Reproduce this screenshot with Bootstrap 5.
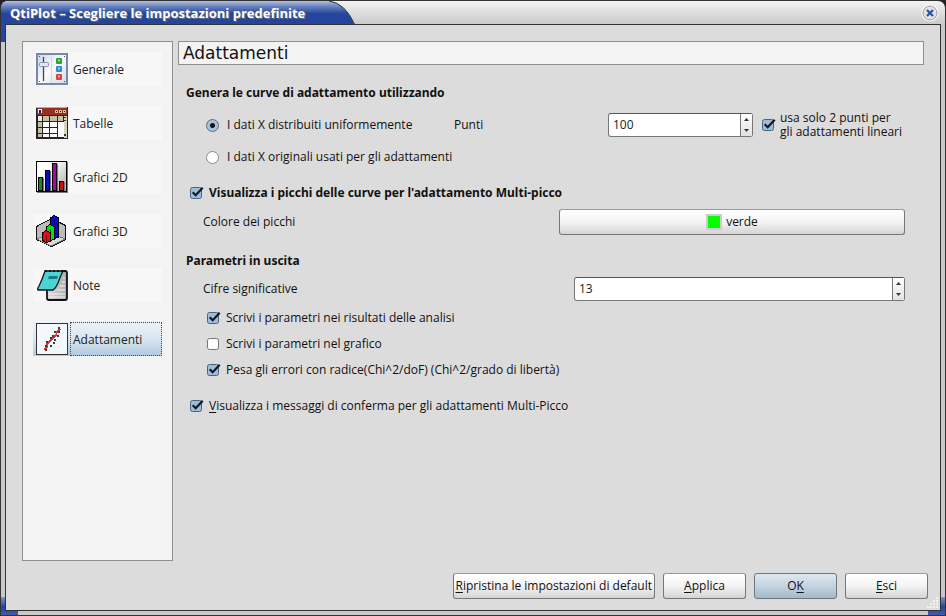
<!DOCTYPE html>
<html lang="it">
<head>
<meta charset="utf-8">
<meta name="viewport" content="width=device-width, initial-scale=1">
<title>QtiPlot - Scegliere le impostazioni predefinite</title>
<link href="https://cdn.jsdelivr.net/npm/bootstrap@5.3.0/dist/css/bootstrap.min.css" rel="stylesheet">
<style>
body { font: 12px/14px "Open Sans", "Noto Sans", sans-serif; color: #111; background: #222; }
.window {
  border: 1px solid #333; border-radius: 8px 8px 0 0; padding: 0 4px 4px;
  background:
    linear-gradient(#b7c2e2, #2b4ca3 8px, #24459c) left 0 top 0 / 4px 41px no-repeat,
    linear-gradient(#7f96cc, #24459c 10px, #3f5cab) left 0 bottom 0 / 17px 18px no-repeat,
    linear-gradient(#7f96cc, #24459c 10px, #3f5cab) right 0 bottom 0 / 17px 18px no-repeat,
    linear-gradient(#f2f2f2, #c9c9c9 24px, #c9c9c9);
}
.titlebar { height: 23px; margin: 0 -4px; }
.caption { width: 355px; height: 23px; }
.caption h1 { z-index: 1; font: bold 13px/16px "Open Sans", sans-serif; color: #fff; padding: 4px 0 0 9px; text-shadow: 1px 1px 0 #67707f; white-space: nowrap; }
.close-button { width: 18px; height: 18px; margin: 3px 6px 0 0; }
.dialog-face { border: 1px solid #333; background: #dcdcdc; padding: 16px 16px 11px; }
.side { width: 151px; background: #f3f3f3; border: 1px solid #8f8f8f; padding: 10px; gap: 20px; }
.side button { height: 34px; padding: 0 0 0 3px; border: 0; background: #f7f7f7; color: #222; text-align: left; }
.side button svg { width: 32px; height: 32px; flex: none; }
.side button span { height: 34px; line-height: 34px; padding-left: 2px; margin-left: 2px; border: 1px solid transparent; }
.side button.chosen { background: linear-gradient(#edf2f8, #d9e5f0 50%, #b0c9e1); }
.side button.chosen span { border: 1px dotted #444; }
.page { margin-left: 5px; }
.page-title { font: 17px/22px "DejaVu Sans", sans-serif; color: #111; background: #f3f3f3; border: 1px solid #8f8f8f; padding: 0 4px; }
.form-area { padding: 18px 19px 0 8px; }
.group-title { font: bold 12px/20px "Noto Sans", sans-serif; }
.sub { padding-left: 17px; }
.sub2 { padding-left: 20px; }
.gap-above { margin-top: 6px; }
.block-above { margin-top: 16px; }
.row-points { display: grid; grid-template-columns: 248fr 154fr 145fr 152fr; height: 32px; }
.row-points label { white-space: nowrap; }
.choice { height: 32px; }
.tick-row { height: 26px; }
.peaks { margin-top: 10px; padding-left: 3px; }
.row-colour { display: grid; grid-template-columns: 356fr 346fr; }
.row-digits { display: grid; grid-template-columns: 371fr 331fr; }
.tick-row, .peaks { gap: 5px; }
.form-check-input.tick { width: 15px; height: 14px; border: 0; border-radius: 0; background: url("data:image/svg+xml,%3Csvg xmlns='http://www.w3.org/2000/svg' viewBox='0 0 15 14'%3E%3Crect x='1.5' y='1.5' width='11' height='11' rx='2' fill='white' stroke='%23777'/%3E%3C/svg%3E") 0 0 / 15px 14px no-repeat; }
.form-check-input.tick:checked { background: url("data:image/svg+xml,%3Csvg xmlns='http://www.w3.org/2000/svg' viewBox='0 0 15 14'%3E%3Crect x='1.5' y='1.5' width='11' height='11' rx='2' fill='%239fbcd9' stroke='%23496480'/%3E%3Cpath d='M3.7 6.2L6.7 9.2L13.7 1.8' fill='none' stroke='%23111922' stroke-width='2.2'/%3E%3C/svg%3E") 0 0 / 15px 14px no-repeat; }
.form-check-input.dot { width: 13px; height: 13px; border: 1px solid #8c8c8c; background: #fff; }
.form-check-input.dot:checked { border-color: #4f6c8a; background: radial-gradient(circle, #111 2px, #a7c1da 3px); }
.spin { height: 24px; border: 1px solid #777; border-top-color: #555; border-radius: 3px; background: #fff; }
.spin input { border: 0; padding: 0 4px; background: none; font: 12px/20px "Open Sans", sans-serif; color: #222; }
.stepper { width: 12px; border-left: 1px solid #777; background: linear-gradient(#fff, #e2e2e2); }
.stepper button { border: 0; padding: 0; background: none; height: 11px; line-height: 0; }
.push { height: 26px; border: 1px solid #777; border-top-color: #999; border-radius: 3px; background: linear-gradient(#fff, #f4f4f4 50%, #d4d4d4); color: #111; padding: 0 2px; }
.push.main { background: linear-gradient(#dee8f0, #c5d4df 50%, #a3b9ca); border-color: #6a7680; }
u { text-underline-offset: 2px; }
.w-std { width: 83px; }
.actions { gap: 8px; margin: 12px -4px 0 0; }
.swatch { width: 16px; height: 16px; background: #0f0; border: 2px solid #ccc; }
.grip { width: 12px; height: 12px; right: 1px; bottom: 1px; }
</style>
<script src="https://cdn.jsdelivr.net/npm/bootstrap@5.3.0/dist/js/bootstrap.bundle.min.js"></script>
</head>
<body>
<div class="window min-vh-100 d-flex flex-column">
  <header class="titlebar d-flex justify-content-between">
    <div class="caption position-relative">
      <svg class="position-absolute top-0 start-0" width="355" height="23" viewBox="0 0 355 23" aria-hidden="true">
        <defs><linearGradient id="cap" x1="0" y1="0" x2="0" y2="1"><stop offset="0" stop-color="#b4c1e2"/><stop offset=".25" stop-color="#6780bd"/><stop offset=".55" stop-color="#24459c"/><stop offset="1" stop-color="#24459c"/></linearGradient></defs>
        <path d="M0 23V6Q1 0 7 0H328Q343 1 353 23Z" fill="url(#cap)"/><path d="M328 0Q344 2 353.500 23" fill="none" stroke="#333"/>
      </svg>
      <h1 class="position-relative m-0">QtiPlot – Scegliere le impostazioni predefinite</h1>
    </div>
    <button class="close-button border-0 bg-transparent p-0 d-flex" aria-label="Chiudi">
      <svg width="18" height="18" viewBox="0 0 18 18"><circle cx="9" cy="9" r="8.500" fill="#fff"/><circle cx="9" cy="9" r="7" fill="#e2e2e2" stroke="#999"/><path d="M6 6L12 12M12 6L6 12" stroke="#2c50a8" stroke-width="2.200"/></svg>
    </button>
  </header>

  <main class="dialog-face flex-grow-1 d-flex flex-column position-relative">
    <div class="d-flex flex-grow-1">
      <nav class="side d-flex flex-column flex-shrink-0" aria-label="Sezioni">
        <button class="d-flex align-items-center">
          <svg viewBox="0 0 32 32"><defs><linearGradient id="pan" x1="0" y1="0" x2="1" y2="1"><stop offset="0" stop-color="#cbd6e6"/><stop offset=".5" stop-color="#f8fafc"/><stop offset="1" stop-color="#cfd9e7"/></linearGradient></defs><rect x="1" y="1" width="30" height="30" fill="url(#pan)" stroke="#7789a5" stroke-width="2"/><path d="M15.500 2V30" stroke="#cfd8e4"/><path d="M7.500 4V28" stroke="#35485f" stroke-width="1.300"/><rect x="3.500" y="9.500" width="9" height="4" rx="1" fill="#dce5f0" stroke="#8496b0"/><rect x="20" y="5" width="6" height="6" rx="1" fill="#2ea62b"/><rect x="20" y="13" width="6" height="6" rx="1" fill="#2d8be0"/><rect x="20" y="21" width="6" height="6" rx="1" fill="#d84343"/><path d="M22 7.500h2M22 15.500h2M22 23.500h2" stroke="#fff" stroke-width="2" opacity=".55"/><path d="M3 3.500h1M3 28.500h1M28 3.500h1M28 28.500h1" stroke="#42536b"/></svg>
          <span class="flex-grow-1">Generale</span></button>
        <button class="d-flex align-items-center">
          <svg viewBox="0 0 32 32" shape-rendering="crispEdges"><path d="M0 0H32V32H0Z" fill="#252525"/><path d="M1 1H31V8H1Z" fill="#963020"/><path d="M0 0H31V1H0Z" fill="#b8ae98"/><path d="M2 2h4v4H2z" fill="#fff"/><path d="M3 3h2v3H3z" fill="#00147c"/><path d="M19 3h3v3h-3zM23 3h3v3h-3zM27 3h3v3h-3z" fill="#c9c4a9"/><path d="M20 4h1v1h-1zM24 4h1v1h-1zM28 4h1v1h-1z" fill="#111"/><path d="M2 9H6V14H2Z" fill="#f0eee0"/><path d="M2 15H6V20H2ZM2 21H6V26H2ZM2 27H6V30H2ZM7 9H13V14H7ZM14 9H21V14H14ZM22 9H27V14H22Z" fill="#c5c0a5"/><path d="M7 15H13V20H7ZM14 15H21V20H14ZM7 21H13V26H7ZM14 21H21V26H14ZM7 27H13V30H7ZM14 27H21V30H14ZM22 15H28V30H22Z" fill="#fff"/><path d="M28 9H31V31H28Z" fill="#d9d5bd"/><path d="M28 10h2v1h-2zM28 13h2v1h-2zM28 27h2v2h-2z" fill="#333"/></svg>
          <span class="flex-grow-1">Tabelle</span></button>
        <button class="d-flex align-items-center">
          <svg viewBox="0 0 32 32" shape-rendering="crispEdges"><defs><linearGradient id="pl" x1="0" y1="0" x2="1" y2="1"><stop offset=".3" stop-color="#fff"/><stop offset="1" stop-color="#aaa"/></linearGradient></defs><path d="M1 1H32V32H1Z" fill="#777"/><rect x=".5" y=".5" width="30" height="30" fill="url(#pl)" stroke="#000"/><path d="M4 17H8V30H4ZM11 10H15V30H11ZM18 3H22V30H18ZM25 21H29V30H25Z" fill="#777"/><g stroke="#000"><path d="M2.500 16.500H6.500V29.500H2.500Z" fill="#10901a"/><path d="M9.500 9.500H13.500V29.500H9.500Z" fill="#0710b2"/><path d="M16.500 2.500H20.500V29.500H16.500Z" fill="#b300a9"/><path d="M23.500 20.500H27.500V29.500H23.500Z" fill="#c51010"/></g></svg>
          <span class="flex-grow-1">Grafici 2D</span></button>
        <button class="d-flex align-items-center">
          <svg viewBox="0 0 32 32" shape-rendering="crispEdges"><path d="M.5 11.500L15.500 3.500L29.500 10.500V24.500L15.500 31.500L.5 24.500Z" fill="#bcbcbc" stroke="#111"/><path d="M1 24L15 18L29 24L15 31Z" fill="#d9d9d9" stroke="#777"/><g stroke="#000"><path d="M14.500 3L18 .5L22.500 3V22L18 24L14.500 21Z" fill="#0808d9"/><path d="M10.500 12L14 9.500L18.500 12V24L14 26L10.500 23Z" fill="#08d821"/><path d="M6.500 18L10 15.500L14.500 18V26L10 28L6.500 25Z" fill="#e01010"/></g><path d="M18 5V22M14 14V24M10 20V27" stroke="#000" opacity=".5"/></svg>
          <span class="flex-grow-1">Grafici 3D</span></button>
        <button class="d-flex align-items-center">
          <svg viewBox="0 0 32 32"><defs><linearGradient id="nt" x1="0" y1="0" x2="1" y2="0"><stop offset="0" stop-color="#ddd"/><stop offset="1" stop-color="#aaa"/></linearGradient></defs><path d="M11 20L26 2H29Q31 2 31 4V29Q31 31 29 31H13Q11 31 11 29Z" fill="url(#nt)" stroke="#111" stroke-width="1.800"/><path d="M13 25h16M13 28h16M21 21h8M24 17h5M26 13h3M27 9h2" stroke="#f4f4f4"/><path d="M9 2H27Q24 8 22 14Q20 19 17 21H2Q1 20 3 17Q6 11 9 2Z" fill="#4ad5d2" stroke="#161616" stroke-width="1.300"/><path d="M13 7H22L21 10H12Z" fill="#177e87"/><path d="M10 1v2M14 1v2M18 1v2M22 1v2M26 1v2M29 1v2" stroke="#111" stroke-width="2"/></svg>
          <span class="flex-grow-1">Note</span></button>
        <button class="d-flex align-items-center chosen" aria-current="page">
          <svg viewBox="0 0 32 32" shape-rendering="crispEdges"><rect x=".5" y=".5" width="31" height="31" fill="#f2f8fb" stroke="#333"/><path d="M8 27L11 24V21L14 18L17 15L20 12L21 9L24 6" fill="none" stroke="#ed3030" stroke-width="1.500"/><path d="M9 26h2v2H9zM14 22h2v2h-2zM9 22h2v2H9zM10 18h2v2h-2zM17 19h2v2h-2zM14 14h2v2h-2zM18 16h2v2h-2zM16 12h2v2h-2zM21 12h2v2h-2zM18 8h2v2h-2zM22 8h2v2h-2zM22 4h2v2h-2z" fill="#3b3b3b"/></svg>
          <span class="flex-grow-1">Adattamenti</span></button>
      </nav>

      <section class="page flex-grow-1">
        <h2 class="page-title m-0">Adattamenti</h2>
        <form class="form-area">
          <h3 class="group-title m-0">Genera le curve di adattamento utilizzando</h3>
          <div class="sub2 gap-above">
            <div class="row-points align-items-center">
              <label class="d-flex align-items-center gap-2"><input class="form-check-input dot m-0" type="radio" name="dati" checked>I dati X distribuiti uniformemente</label>
              <label for="punti">Punti</label>
              <div class="spin d-flex">
                <input id="punti" class="flex-grow-1 w-100" type="text" value="100">
                <div class="stepper d-flex flex-column flex-shrink-0">
                  <button type="button" aria-label="Aumenta punti"><svg width="5" height="3"><path d="M0 3L2.500 0L5 3Z" fill="#333"/></svg></button>
                  <button type="button" aria-label="Riduci punti"><svg width="5" height="3"><path d="M0 0L2.500 3L5 0Z" fill="#333"/></svg></button>
                </div>
              </div>
              <label class="d-flex align-items-center ps-2 gap-1"><input class="form-check-input tick m-0 flex-shrink-0" type="checkbox" checked><span>usa solo 2 punti per<br>gli adattamenti lineari</span></label>
            </div>
            <label class="d-flex align-items-center gap-2 choice"><input class="form-check-input dot m-0" type="radio" name="dati">I dati X originali usati per gli adattamenti</label>
          </div>

          <label class="group-title peaks d-flex align-items-center"><input class="form-check-input tick m-0" type="checkbox" checked>Visualizza i picchi delle curve per l'adattamento Multi-picco</label>
          <div class="sub row-colour align-items-center gap-above">
            <label for="colore">Colore dei picchi</label>
            <button id="colore" type="button" class="push d-flex align-items-center justify-content-center gap-1"><i class="swatch"></i>verde</button>
          </div>

          <h3 class="group-title mb-0 block-above">Parametri in uscita</h3>
          <div class="sub row-digits align-items-center gap-above">
            <label for="cifre">Cifre significative</label>
            <div class="spin d-flex">
              <input id="cifre" class="flex-grow-1 w-100" type="text" value="13">
              <div class="stepper d-flex flex-column flex-shrink-0">
                <button type="button" aria-label="Aumenta cifre"><svg width="5" height="3"><path d="M0 3L2.500 0L5 3Z" fill="#333"/></svg></button>
                <button type="button" aria-label="Riduci cifre"><svg width="5" height="3"><path d="M0 0L2.500 3L5 0Z" fill="#333"/></svg></button>
              </div>
            </div>
          </div>
          <div class="sub2 d-flex flex-column mt-1">
            <label class="tick-row d-flex align-items-center"><input class="form-check-input tick m-0" type="checkbox" checked>Scrivi i parametri nei risultati delle analisi</label>
            <label class="tick-row d-flex align-items-center"><input class="form-check-input tick m-0" type="checkbox">Scrivi i parametri nel grafico</label>
            <label class="tick-row d-flex align-items-center"><input class="form-check-input tick m-0" type="checkbox" checked>Pesa gli errori con radice(Chi^2/doF) (Chi^2/grado di libertà)</label>
          </div>
          <label class="tick-row peaks d-flex align-items-center"><input class="form-check-input tick m-0" type="checkbox" checked><span><u>V</u>isualizza i messaggi di conferma per gli adattamenti Multi-Picco</span></label>
        </form>
      </section>
    </div>

    <footer class="actions d-flex justify-content-end">
      <button class="push"><u>R</u>ipristina le impostazioni di default</button>
      <button class="push w-std"><u>A</u>pplica</button>
      <button class="push main w-std">O<u>K</u></button>
      <button class="push w-std"><u>E</u>sci</button>
    </footer>
    <svg class="grip position-absolute" viewBox="0 0 12 12" aria-hidden="true"><path d="M9 1h2M6 4h2M9 4h2M3 7h2M6 7h2M9 7h2M0 10h2M3 10h2M6 10h2M9 10h2" stroke="#f2f2f2" stroke-width="2"/></svg>
  </main>
</div>
</body>
</html>
